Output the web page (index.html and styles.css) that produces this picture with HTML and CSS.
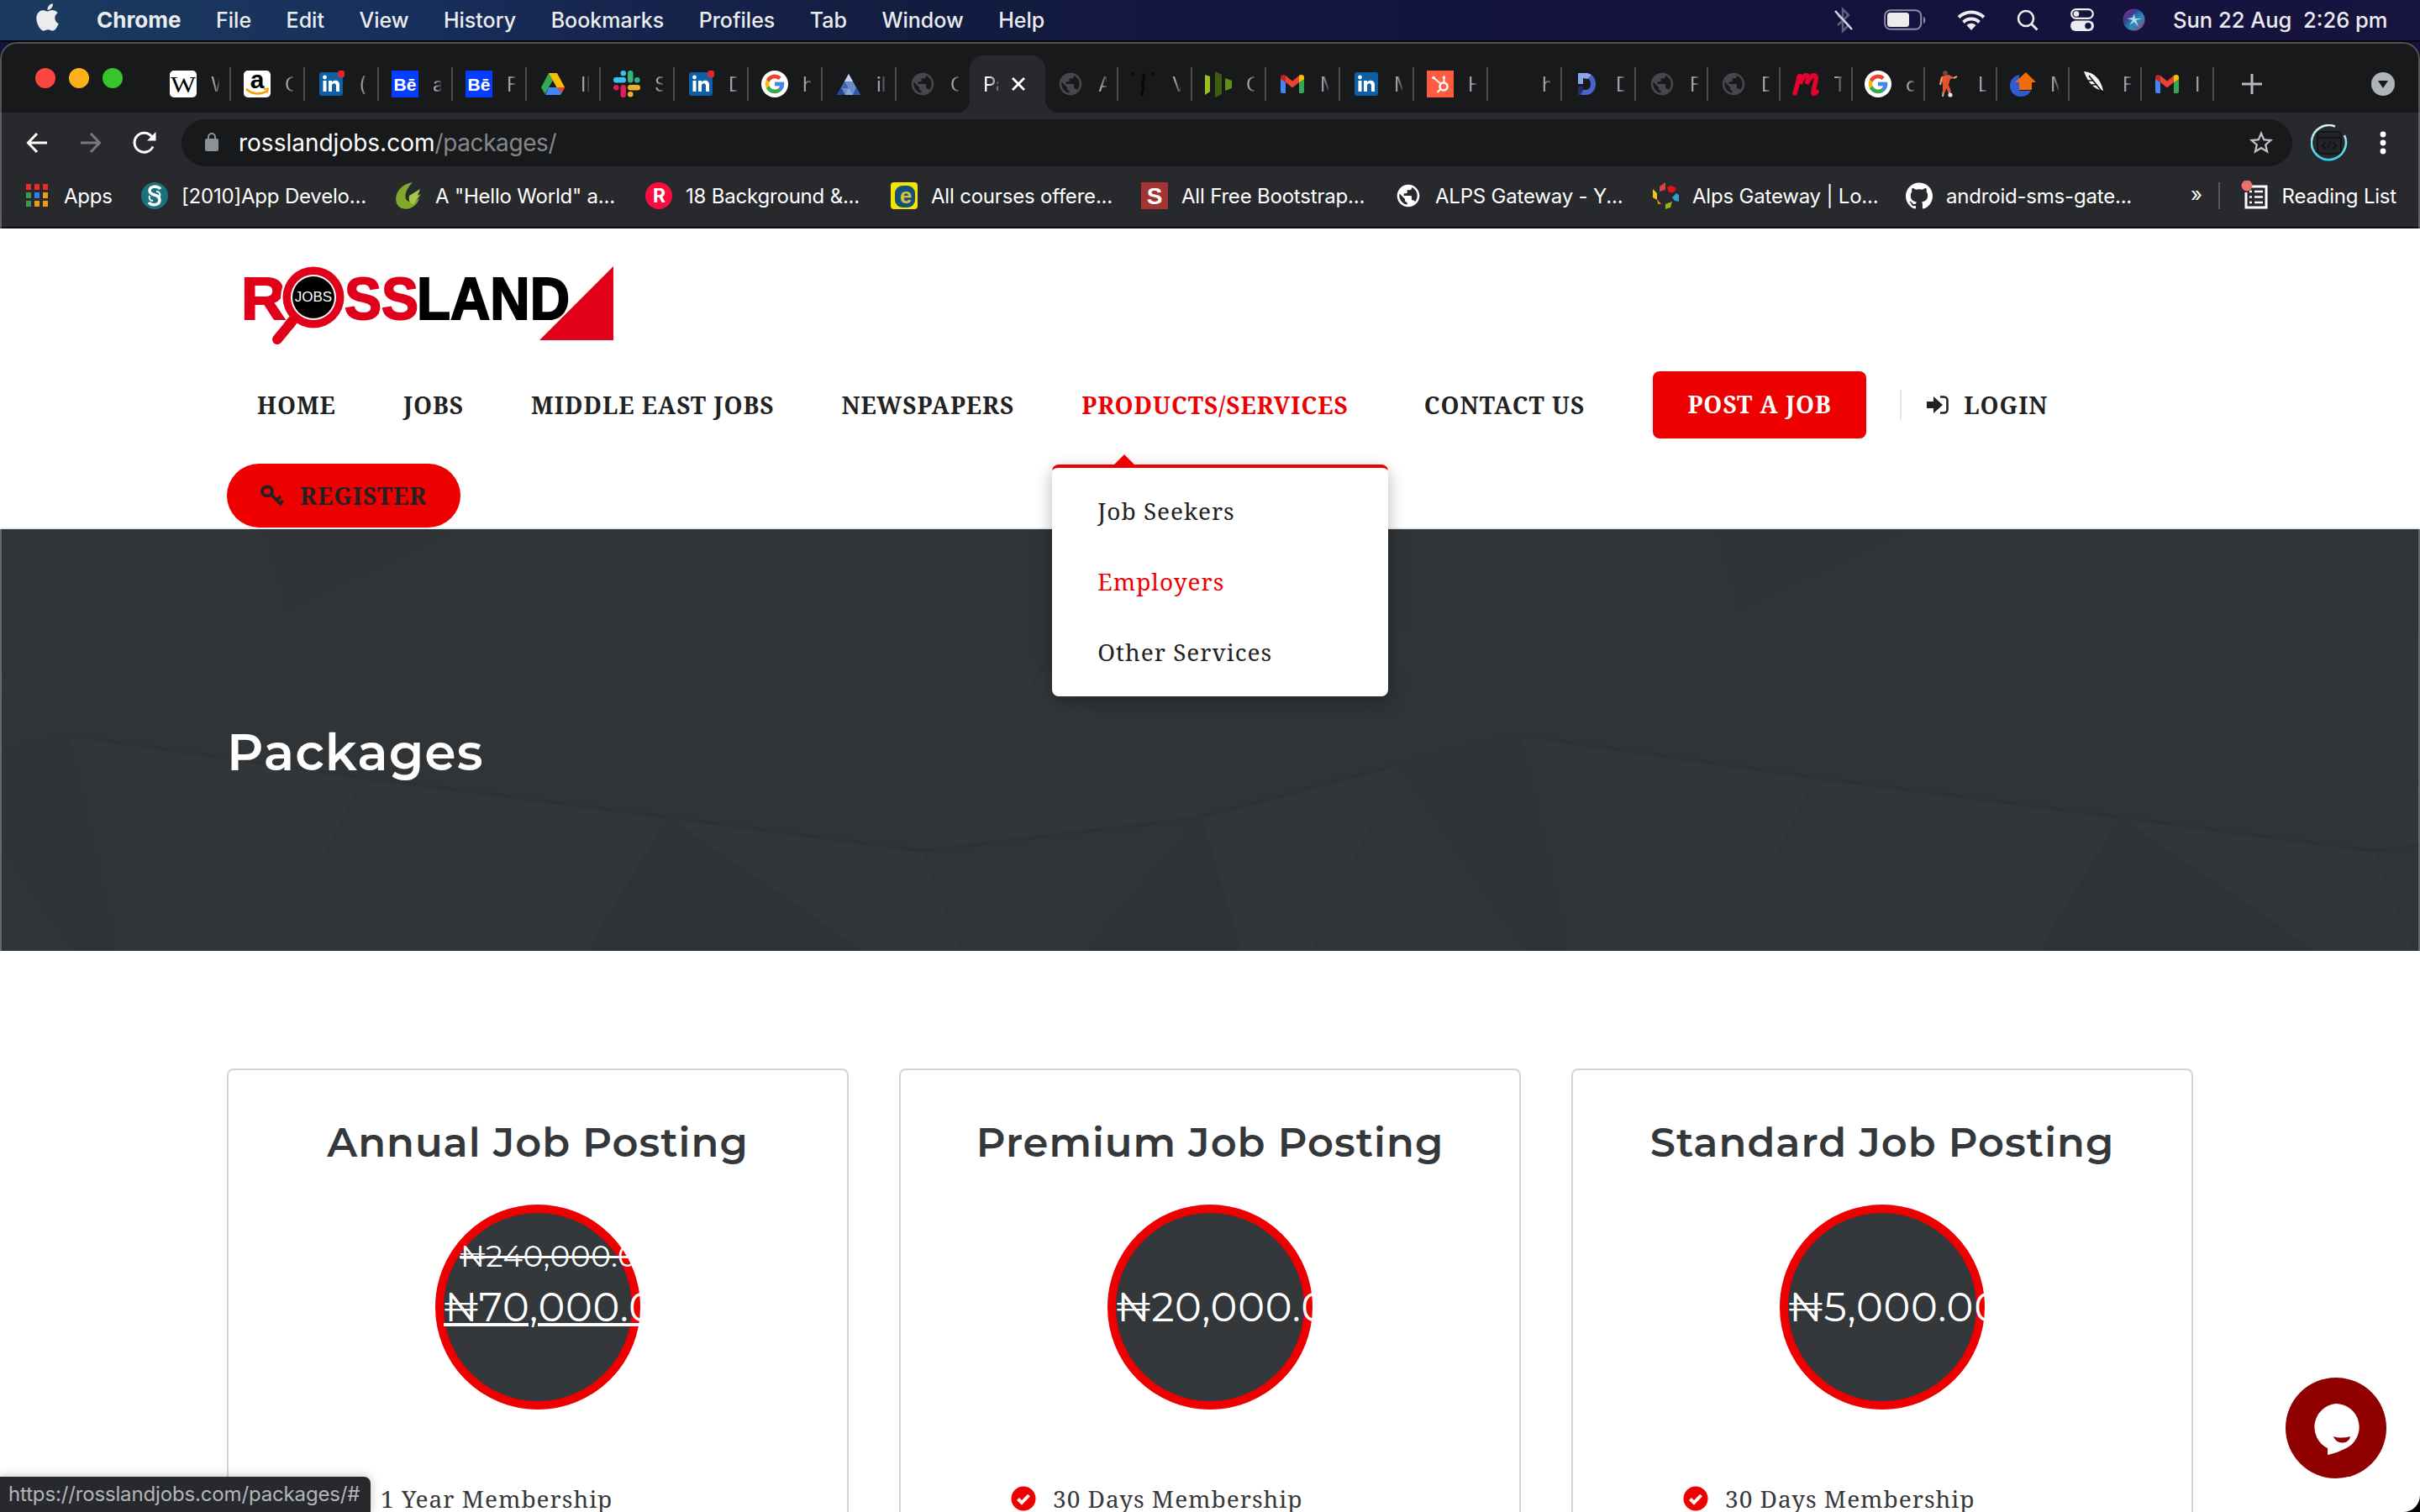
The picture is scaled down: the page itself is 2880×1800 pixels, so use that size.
FILE: index.html
```
<!DOCTYPE html>
<html lang="en">
<head>
<meta charset="utf-8">
<title>Packages</title>
<link rel="stylesheet" href="styles.css">
</head>
<body>
<svg class="defs" aria-hidden="true">
  <symbol id="globe" viewBox="0 0 24 24"><path d="M12 2C6.48 2 2 6.48 2 12s4.48 10 10 10 10-4.48 10-10S17.52 2 12 2zm-1 17.93c-3.95-.49-7-3.85-7-7.93 0-.62.08-1.21.21-1.79L9 15v1c0 1.1.9 2 2 2v1.93zm6.9-2.54c-.26-.81-1-1.39-1.9-1.39h-1v-3c0-.55-.45-1-1-1H8v-2h2c.55 0 1-.45 1-1V7h2c1.1 0 2-.9 2-2v-.41c2.93 1.19 5 4.06 5 7.41 0 2.08-.8 3.97-2.1 5.39z" fill="currentColor"/></symbol>
  <symbol id="linkedin" viewBox="0 0 32 32"><rect x="2" y="2" width="28" height="28" rx="3" fill="#0f5fa6"/><rect x="6.500" y="12" width="4" height="13" fill="#fff"/><circle cx="8.500" cy="8" r="2.400" fill="#fff"/><path d="M13 12h4v2c2-3.500 9-3.500 9 3v8h-4v-7c0-4-5-3.500-5 0v7h-4z" fill="#fff"/></symbol>
  <symbol id="reddot" viewBox="0 0 32 32"><circle cx="28" cy="4" r="4.500" fill="#e0262c"/></symbol>
  <symbol id="behance" viewBox="0 0 32 32"><rect width="32" height="32" fill="#053eff"/><text x="16" y="24" text-anchor="middle" class="glyph-be">Bē</text></symbol>
  <symbol id="gmail" viewBox="0 0 32 32"><path d="M2 8v17c0 1 1 2 2 2h4V14z" fill="#4285f4"/><path d="M30 8v17c0 1-1 2-2 2h-4V14z" fill="#34a853"/><path d="M8 14v-8l8 6.500L24 6v8l-8 6.500z" fill="#ea4335"/><path d="M2 8c0-3 3.500-4 6-2v8l-6-4z" fill="#c5221f"/><path d="M30 8c0-3-3.500-4-6-2v8l6-4z" fill="#fbbc04"/></symbol>
  <symbol id="google" viewBox="0 0 64 64"><circle cx="32" cy="32" r="32" fill="#fff"/><g transform="translate(5 5) scale(1.125)"><path fill="#fbbc05" d="M43.611 20.083H42V20H24v8h11.303c-1.649 4.657-6.08 8-11.303 8-6.627 0-12-5.373-12-12s5.373-12 12-12c3.059 0 5.842 1.154 7.961 3.039l5.657-5.657C34.046 6.053 29.268 4 24 4 12.955 4 4 12.955 4 24s8.955 20 20 20 20-8.955 20-20c0-1.341-.138-2.65-.389-3.917z"/><path fill="#ea4335" d="M6.306 14.691l6.571 4.819C14.655 15.108 18.961 12 24 12c3.059 0 5.842 1.154 7.961 3.039l5.657-5.657C34.046 6.053 29.268 4 24 4 16.318 4 9.656 8.337 6.306 14.691z"/><path fill="#34a853" d="M24 44c5.166 0 9.86-1.977 13.409-5.192l-6.19-5.238A11.91 11.91 0 0124 36c-5.202 0-9.619-3.317-11.283-7.946l-6.522 5.025C9.505 39.556 16.227 44 24 44z"/><path fill="#4285f4" d="M43.611 20.083H24v8h11.303a12.04 12.04 0 01-4.087 5.571l6.19 5.238C36.971 39.205 44 34 44 24c0-1.341-.138-2.65-.389-3.917z"/></g></symbol>
  <symbol id="check" viewBox="0 0 30 30"><circle cx="15" cy="15" r="14.500" fill="#ee0000"/><path d="M8.500 15.500l4.500 4.500 8.500-9" fill="none" stroke="#fff" stroke-width="4"/></symbol>
</svg>

<header class="menubar">
  <svg class="apple" viewBox="2 0 20 24"><path fill="#ececee" d="M12.152 6.896c-.948 0-2.415-1.078-3.96-1.04-2.04.027-3.91 1.183-4.961 3.014-2.117 3.675-.546 9.103 1.519 12.09 1.013 1.454 2.208 3.09 3.792 3.039 1.52-.065 2.09-.987 3.935-.987 1.831 0 2.35.987 3.96.948 1.637-.026 2.676-1.48 3.676-2.948 1.156-1.688 1.636-3.325 1.662-3.415-.039-.013-3.182-1.221-3.22-4.857-.026-3.04 2.48-4.494 2.597-4.559-1.429-2.09-3.623-2.324-4.39-2.376-2-.156-3.675 1.09-4.61 1.09zM15.53 3.83c.843-1.012 1.4-2.427 1.245-3.83-1.207.052-2.662.805-3.532 1.818-.78.896-1.454 2.338-1.273 3.714 1.338.104 2.715-.688 3.559-1.701"/></svg>
  <nav class="menus">
    <span class="app">Chrome</span><span>File</span><span>Edit</span><span>View</span><span>History</span><span>Bookmarks</span><span>Profiles</span><span>Tab</span><span>Window</span><span>Help</span>
  </nav>
  <div class="status-icons">
    <svg class="i-bt" width="24" height="32" viewBox="0 0 24 32"><path d="M5 10l13 12-7 7V3l7 7L5 22" fill="none" stroke="#5d6080" stroke-width="2.500"/><path d="M2 5l20 22" stroke="#d8d8e0" stroke-width="2.500"/></svg>
    <svg class="i-bat" width="50" height="26" viewBox="0 0 50 26"><rect x="1.200" y="1.200" width="43" height="22.600" rx="6.500" fill="none" stroke="#8c8da3" stroke-width="2"/><rect x="4" y="4" width="26" height="17" rx="3.500" fill="#ececee"/><path d="M47 9c3 1 3 7 0 8z" fill="#8c8da3"/></svg>
    <svg class="i-wifi" width="34" height="25" viewBox="0 0 34 25"><g fill="none" stroke="#ececee" stroke-width="4"><path d="M2 9.500a21.500 21.500 0 0130 0"/><path d="M7.500 15.500a13.500 13.500 0 0119 0"/></g><path d="M11.500 19a8 8 0 0111 0L17 25z" fill="#ececee"/></svg>
    <svg class="i-search" width="26" height="26" viewBox="0 0 26 26"><circle cx="11" cy="11" r="9" fill="none" stroke="#ececee" stroke-width="2.600"/><path d="M17.500 17.500l7 7" stroke="#ececee" stroke-width="3"/></svg>
    <svg class="i-cc" width="28" height="27" viewBox="0 0 28 27"><rect x="1.200" y="1.200" width="25.600" height="10.600" rx="5.300" fill="none" stroke="#ececee" stroke-width="2.200"/><circle cx="7" cy="6.500" r="3.300" fill="#ececee"/><rect y="14.500" width="28" height="12.500" rx="6.200" fill="#ececee"/><circle cx="21" cy="20.800" r="3.800" fill="#14123c"/></svg>
    <svg class="i-siri" width="27" height="27" viewBox="0 0 27 27"><defs><linearGradient id="sg" x1="0" y1="0" x2="1" y2="1"><stop offset="0" stop-color="#c02c86"/><stop offset=".3" stop-color="#3a3a8c"/><stop offset=".6" stop-color="#2590b8"/><stop offset="1" stop-color="#c02c66"/></linearGradient></defs><circle cx="13.500" cy="13.500" r="13" fill="url(#sg)"/><path d="M14 6l1 6 8 0-7 2 3 8-5-6-6 4 4-6-7-2 7-1z" fill="#d4f4ff" opacity=".8"/></svg>
  </div>
  <div class="clock">Sun 22 Aug&nbsp; 2:26 pm</div>
</header>

<div class="window">
<section class="tabstrip">
  <div class="lights"><i class="red"></i><i class="amber"></i><i class="green"></i></div>
  <div class="tabs">
    <div class="tab"><svg viewBox="0 0 32 32"><rect width="32" height="32" rx="5" fill="#fff"/><text x="16" y="26" text-anchor="middle" class="glyph-w" textLength="30" lengthAdjust="spacingAndGlyphs">W</text></svg><span>W</span></div>
    <div class="tab"><svg viewBox="0 0 32 32"><rect width="32" height="32" rx="5" fill="#fff"/><text x="16" y="21" text-anchor="middle" class="glyph-a">a</text><path d="M3 22c8 7 18 7 25 2" fill="none" stroke="#f90" stroke-width="2.600"/><path d="M24 22l5-.500-1 5" fill="none" stroke="#f90" stroke-width="1.800"/></svg><span>C</span></div>
    <div class="tab"><svg viewBox="0 0 32 32"><use href="#linkedin"/><use href="#reddot"/></svg><span>(</span></div>
    <div class="tab"><svg><use href="#behance"/></svg><span>a</span></div>
    <div class="tab"><svg><use href="#behance"/></svg><span>F</span></div>
    <div class="tab"><svg viewBox="0 0 32 32"><path d="M11 3h10l-5 9z" fill="#188038"/><path d="M11 3l5 8.500L6.500 28 2 20z" fill="#34a853"/><path d="M21 3l9 17H20.500L11 3z" fill="#fbbc04"/><path d="M11 20h19l-5 9H7z" fill="#4285f4"/><path d="M20.500 20H30l-3.500 7z" fill="#ea4335"/></svg><span>II</span></div>
    <div class="tab"><svg viewBox="0 0 32 32"><g fill="#36c5f0"><rect x="0" y="8" width="15" height="6.500" rx="3.200"/><rect x="8.500" y="0" width="6.500" height="6.500" rx="3.200"/></g><g fill="#2eb67d"><rect x="17" y="0" width="6.500" height="14.500" rx="3.200"/><rect x="25" y="8" width="6.500" height="6.500" rx="3.200"/></g><g fill="#ecb22e"><rect x="17" y="17" width="15" height="6.500" rx="3.200"/><rect x="17" y="25" width="6.500" height="6.500" rx="3.200"/></g><g fill="#e01e5a"><rect x="8.500" y="17" width="6.500" height="15" rx="3.200"/><rect x="0" y="17" width="6.500" height="6.500" rx="3.200"/></g></svg><span>S</span></div>
    <div class="tab"><svg viewBox="0 0 32 32"><use href="#linkedin"/><use href="#reddot"/></svg><span>D</span></div>
    <div class="tab"><svg><use href="#google"/></svg><span>h</span></div>
    <div class="tab"><svg viewBox="0 0 32 32"><path d="M16 4l14 25H2z" fill="#6c8cc9"/><path d="M16 4l5 9H11z" fill="#c7d5ef"/><path d="M7 20l5 9H2z" fill="#1f4796"/><path d="M11 13l5 8H7z" fill="#3e63b0"/><path d="M16 21l5 8h-9z" fill="#8aa5da"/><path d="M25 20l5 9h-9z" fill="#2e57aa"/></svg><span>il</span></div>
    <div class="tab last dim"><svg><use href="#globe"/></svg><span>C</span></div>
    <div class="tab active"><span>Pa</span><svg class="close" viewBox="0 0 18 18"><path d="M2 2l14 14M16 2L2 16" stroke="#fff" stroke-width="2.800"/></svg></div>
    <div class="tab dim"><svg><use href="#globe"/></svg><span>A</span></div>
    <div class="tab"><svg viewBox="0 0 32 32"><path d="M14 4c5 6-2 8 0 13s-2 8-1 13M3 2L2 5M25 2l1 3" fill="none" stroke="#060707" stroke-width="3"/></svg><span>V</span></div>
    <div class="tab"><svg viewBox="0 0 32 32"><path d="M0 5l6 2v18l-6 4z" fill="#96c11f"/><path d="M12 1l8 4v23l-8 4z" fill="#3f5c12"/><path d="M24 9l8 3v9l-8 3z" fill="#5f8c1a"/></svg><span>C</span></div>
    <div class="tab"><svg><use href="#gmail"/></svg><span>M</span></div>
    <div class="tab"><svg><use href="#linkedin"/></svg><span>M</span></div>
    <div class="tab"><svg viewBox="0 0 32 32"><rect width="32" height="32" fill="#ff5c42"/><circle cx="20" cy="19" r="4.500" fill="none" stroke="#fff" stroke-width="2.600"/><path d="M17 16L8 8.500M20.500 14V8M16.500 22l-4 4" stroke="#fff" stroke-width="2"/><circle cx="8" cy="8.500" r="1.800" fill="#fff"/><circle cx="20.500" cy="8" r="1.800" fill="#fff"/></svg><span>H</span></div>
    <div class="tab"><svg></svg><span>h</span></div>
    <div class="tab"><svg viewBox="0 0 32 32"><path d="M4 3h9c16 0 16 26 0 26H4V19h6v4h3c8 0 8-14 0-14H4z" fill="#4a63c8"/><path d="M4 3h11l5 2-5 5-5-1v7H4z" fill="#8aa5e8"/><path d="M4 19h6v4l-3 6H4z" fill="#232c6b"/></svg><span>D</span></div>
    <div class="tab slim dim"><svg><use href="#globe"/></svg><span>F</span></div>
    <div class="tab slim dim"><svg><use href="#globe"/></svg><span>D</span></div>
    <div class="tab slim"><svg viewBox="0 0 32 32"><path d="M3 27C6 18 7 12 8 7c2-2 4 2 1 9 3-8 7-13 10-9 1 3-1 5-2 9 3-7 8-13 11-9 2 4-4 15-3 20 1 1 3 0 4-2" fill="none" stroke="#e5002d" stroke-width="5.500" stroke-linecap="round"/></svg><span>T</span></div>
    <div class="tab slim"><svg><use href="#google"/></svg><span>c</span></div>
    <div class="tab slim"><svg viewBox="0 0 32 32"><circle cx="10" cy="3" r="3" fill="#6b4a34"/><path d="M5 7l9-2 8 4-6 1-2 7H7z" fill="#e5532d"/><path d="M20 9l4-2M6 8l-2 9M8 24l-1 7M14 24l2 5" stroke="#e0a06c" stroke-width="2.200"/><path d="M7 17h7l3 8-3 1-3-5-1 5H7z" fill="#e5532d"/><circle cx="16" cy="29" r="2.600" fill="#dfe6ea"/></svg><span>L</span></div>
    <div class="tab slim"><svg viewBox="0 0 32 32"><path d="M15 5C-4 5-3 31 14 31c6 0 10-3 12-7H12V5z" fill="#2f5bd0"/><path d="M20 2l12 12h-5v9H12v-9H7z" fill="#f26a0a"/></svg><span>M</span></div>
    <div class="tab slim"><svg viewBox="0 0 32 32"><path d="M3 1c12 1 20 9 23 23C14 22 8 14 3 1z" fill="#f4f4f4"/><path d="M9 6l18 22M8 12l6 0M12 17l7 0" stroke="#0c0c0c" stroke-width="1.500"/></svg><span>F</span></div>
    <div class="tab slim"><svg><use href="#gmail"/></svg><span>I</span></div>
  </div>
  <svg class="plus" viewBox="0 0 24 24"><path d="M12 0v24M0 12h24" stroke="#b4b7bc" stroke-width="3"/></svg>
  <svg class="tabsearch" viewBox="0 0 28 28"><circle cx="14" cy="14" r="14" fill="#b0b4ba"/><path d="M8 10h12l-6 9z" fill="#18191b"/></svg>
</section>

<section class="toolbar">
  <svg class="back" viewBox="0 0 26 26"><path d="M25 13H3M13 2L2.500 13 13 24" fill="none" stroke="#fff" stroke-width="3"/></svg>
  <svg class="fwd" viewBox="0 0 26 26"><path d="M1 13h22M13 2l10.500 11L13 24" fill="none" stroke="#78797c" stroke-width="3"/></svg>
  <svg class="reload" viewBox="0 0 28 28"><path d="M24 18.500A11.500 11.500 0 1122.500 6.500" fill="none" stroke="#fff" stroke-width="3"/><path d="M27.500 1v10.500H17z" fill="#fff"/></svg>
  <div class="omnibox">
    <svg class="lock" viewBox="0 0 16 22"><rect y="7" width="16" height="15" rx="2" fill="#8b9299"/><path d="M4 8V5a4 4 0 018 0v3" fill="none" stroke="#8b9299" stroke-width="2"/></svg>
    <span class="url">rosslandjobs.com<b>/packages/</b></span>
    <svg class="star" viewBox="0 0 24 24"><path d="M22 9.240l-7.190-.620L12 2 9.190 8.630 2 9.240l5.460 4.730L5.820 21 12 17.270 18.180 21l-1.630-7.030L22 9.240zM12 15.400l-3.760 2.270 1-4.280-3.320-2.880 4.380-.380L12 6.100l1.710 4.040 4.380.380-3.320 2.880 1 4.280L12 15.400z" fill="#bfc1c5"/></svg>
  </div>
  <svg class="profile" viewBox="0 0 44 44"><defs><linearGradient id="pg" x1="0" y1="1" x2="0" y2="0"><stop offset="0" stop-color="#38d0f0"/><stop offset="1" stop-color="#d8eef0"/></linearGradient></defs><path d="M40 13A20.500 20.500 0 1129 2.600" fill="none" stroke="url(#pg)" stroke-width="2.600"/><rect x="8" y="9" width="28" height="26" rx="4" fill="#222427" stroke="#131415" stroke-width="2"/><path d="M8 16h28M18 21l-4 4 4 4M26 21l4 4-4 4M23.500 20l-3 10" fill="none" stroke="#131415" stroke-width="1.800"/></svg>
  <svg class="dots" viewBox="0 0 8 28"><circle cx="4" cy="4" r="3.400" fill="#fff"/><circle cx="4" cy="14" r="3.400" fill="#fff"/><circle cx="4" cy="24" r="3.400" fill="#fff"/></svg>
</section>

<section class="bookmarks">
  <div class="bm w-apps"><svg viewBox="0 0 32 32"><g fill="#ee2a24"><rect x="3" y="2" width="6" height="7"/><rect x="13" y="2" width="6" height="7"/><rect x="23" y="2" width="6" height="7"/></g><g><rect x="3" y="12" width="6" height="7" fill="#3d9a4a"/><rect x="13" y="12" width="6" height="7" fill="#2f7cf0"/><rect x="23" y="12" width="6" height="7" fill="#f09a10"/><rect x="3" y="22" width="6" height="7" fill="#3d9a4a"/><rect x="13" y="22" width="6" height="7" fill="#f09a10"/><rect x="23" y="22" width="6" height="7" fill="#f09a10"/></g></svg><span>Apps</span></div>
  <div class="bm w-2010"><svg viewBox="0 0 32 32"><circle cx="16" cy="16" r="16" fill="#1d717c"/><path d="M23 8c-3-4-13-4-13 2 0 7 12 3 12 11 0 7-10 7-13 3" fill="none" stroke="#fff" stroke-width="3.500"/><path d="M18 11c4 0 5 3 4 6M14 22c-4 0-5-3-4-6" fill="none" stroke="#fff" stroke-width="2"/></svg><span>[2010]App Develo...</span></div>
  <div class="bm w-hello"><svg viewBox="0 0 32 32"><path d="M21 0C6 2-3 16 3 27c7 9 22 5 26-8-5 5-13 6-16 1-2-6 2-14 8-20z" fill="#80a82c"/><path d="M17 16l13-8-3 8 4-2-9 12c-4 0-6-4-5-10z" fill="#a6c64a"/></svg><span>A "Hello World" a...</span></div>
  <div class="bm w-18"><svg viewBox="0 0 32 32"><circle cx="16" cy="16" r="16" fill="#f70d42"/><text x="16.500" y="24" text-anchor="middle" class="glyph-r">R</text></svg><span>18 Background &amp;...</span></div>
  <div class="bm w-all"><svg viewBox="0 0 32 32"><rect width="32" height="32" rx="4" fill="#f4e400"/><rect x="5" y="4" width="24" height="26" rx="9" fill="#14507c"/><text x="18" y="25" text-anchor="middle" class="glyph-e">e</text></svg><span>All courses offere...</span></div>
  <div class="bm w-boot"><svg viewBox="0 0 32 32"><rect width="32" height="32" fill="#a33433"/><text x="16" y="26" text-anchor="middle" class="glyph-s">S</text></svg><span>All Free Bootstrap...</span></div>
  <div class="bm w-alps"><svg class="globe"><use href="#globe"/></svg><span>ALPS Gateway - Y...</span></div>
  <div class="bm w-lo"><svg viewBox="0 0 32 32"><path d="M9 5l7-5v9l-7 2z" fill="#d8453a"/><path d="M1 8l5 5v8l-5-3z" fill="#f2c21c"/><path d="M18 6l5-2 6 3-3 5h-6z" fill="#e5121c"/><path d="M24 18l5-5 3 2v8l-5-1z" fill="#31a0cf"/><path d="M16 26l8-3-2 7-6 2z" fill="#9ab518"/><path d="M6 20l5 6-4 0z" fill="#e08a1c"/></svg><span>Alps Gateway | Lo...</span></div>
  <div class="bm w-git"><svg viewBox="0 0 24 24"><path fill="#fff" d="M12 .297c-6.630 0-12 5.373-12 12 0 5.303 3.438 9.800 8.205 11.385.6.113.82-.258.82-.577 0-.285-.01-1.040-.015-2.040-3.338.724-4.042-1.610-4.042-1.610C4.422 18.070 3.633 17.700 3.633 17.700c-1.087-.744.084-.729.084-.729 1.205.084 1.838 1.236 1.838 1.236 1.070 1.835 2.809 1.305 3.495.998.108-.776.417-1.305.76-1.605-2.665-.3-5.466-1.332-5.466-5.930 0-1.310.465-2.380 1.235-3.220-.135-.303-.54-1.523.105-3.176 0 0 1.005-.322 3.300 1.230.96-.267 1.980-.399 3-.405 1.020.006 2.040.138 3 .405 2.280-1.552 3.285-1.230 3.285-1.230.645 1.653.24 2.873.12 3.176.765.840 1.230 1.910 1.230 3.220 0 4.610-2.805 5.625-5.475 5.920.42.360.81 1.096.81 2.220 0 1.606-.015 2.896-.015 3.286 0 .315.21.690.825.570C20.565 22.092 24 17.592 24 12.297c0-6.627-5.373-12-12-12"/></svg><span>android-sms-gate...</span></div>
  <div class="more">»</div>
  <div class="reading"><svg viewBox="0 0 36 36"><path d="M11 7h20v25H7V14" fill="none" stroke="#fff" stroke-width="3"/><path d="M17 13h10M17 19.500h10M17 26h10" stroke="#fff" stroke-width="2.600"/><path d="M11 13h3M11 19.500h3M11 26h3" stroke="#fff" stroke-width="2.600"/><circle cx="8" cy="6" r="6.500" fill="#e8716b"/></svg><span>Reading List</span></div>
</section>

<main class="page">
  <header class="site-header">
    <svg class="logo" viewBox="0 0 480 108">
      <g class="logo-red"><text x="17" y="68" textLength="53" lengthAdjust="spacingAndGlyphs">R</text><text x="140" y="68" textLength="88" lengthAdjust="spacingAndGlyphs">SS</text></g>
      <g class="logo-black"><text x="226" y="68" textLength="182" lengthAdjust="spacingAndGlyphs">LAND</text></g>
      <path d="M79 69L60 92" stroke="#e1001a" stroke-width="12" stroke-linecap="round"/>
      <circle cx="103" cy="42" r="39" fill="#fff"/>
      <path d="M81 66l-8 10" stroke="#e1001a" stroke-width="12"/>
      <circle cx="103" cy="42" r="36.500" fill="#e1001a"/><circle cx="103" cy="42" r="27" fill="#fff"/><circle cx="103" cy="42" r="25" fill="#000"/>
      <text x="103" y="47" text-anchor="middle" class="logo-jobs">JOBS</text>
      <path d="M460 5v88h-88z" fill="#e1001a" stroke="#fff" stroke-width="3" paint-order="stroke"/>
    </svg>
    <nav class="nav">
      <a>HOME</a><a>JOBS</a><a>MIDDLE EAST JOBS</a><a>NEWSPAPERS</a>
      <a class="current">PRODUCTS/SERVICES
        <span class="dropdown"><span>Job Seekers</span><span class="hover">Employers</span><span>Other Services</span></span>
      </a>
      <a class="contact">CONTACT US</a>
      <a class="post">POST A JOB</a>
      <a class="login"><svg viewBox="0 0 26 22"><path d="M0 7h8V1l11 10L8 21v-6H0z" fill="#222"/><path d="M16 1.500h4.500a4 4 0 014 4v11a4 4 0 01-4 4H16" fill="none" stroke="#222" stroke-width="2.600"/></svg>LOGIN</a>
    </nav>
    <a class="register"><svg viewBox="0 0 28 26"><ellipse cx="8" cy="8" rx="6" ry="5.500" fill="none" stroke="#222" stroke-width="4"/><path d="M12 11l13 13M20 18l4-4M24 22l3-3" stroke="#222" stroke-width="3.600"/></svg>REGISTER</a>
  </header>

  <section class="banner">
    <svg class="facets" viewBox="0 0 2880 502" preserveAspectRatio="none" aria-hidden="true">
      <defs><g id="tile">
        <g fill="#323639"><path d="M80 245L433 295 326 502H239z"/><path d="M433 295L795 343 698 502H578z"/><path d="M505 400l73 102H381z"/><path d="M795 343l302 39 46 120H1028z"/><path d="M1245 165l185 178-333 39z"/><path d="M1665 280l-105 222h-83l-47-159z"/><path d="M-63 117L60 228-63 160z"/><path d="M707 0h93l440 165-145 210z"/></g>
        <g fill="#2f3336"><path d="M80 245L137 502H90L-60 280z"/><path d="M795 343l233 159H698z"/><path d="M1430 343l47 159h-182z"/><path d="M317 0h223L344 93z"/></g>
        <path d="M80 245L433 296 795 343l302 40 333-40 235-63 143-35" fill="none" stroke="#2f3235" stroke-width="4"/>
      </g></defs>
      <use href="#tile"/><use href="#tile" x="1728"/>
    </svg>
    <h1>Packages</h1>
  </section>

  <section class="cards">
    <article class="card">
      <h2>Annual Job Posting</h2>
      <div class="price sale"><del>₦240,000.00</del><ins>₦70,000.00</ins></div>
      <ul><li><svg><use href="#check"/></svg>1 Year Membership</li></ul>
    </article>
    <article class="card">
      <h2>Premium Job Posting</h2>
      <div class="price"><span>₦20,000.00</span></div>
      <ul><li><svg><use href="#check"/></svg>30 Days Membership</li></ul>
    </article>
    <article class="card">
      <h2>Standard Job Posting</h2>
      <div class="price"><span>₦5,000.00</span></div>
      <ul><li><svg><use href="#check"/></svg>30 Days Membership</li></ul>
    </article>
  </section>
</main>
</div>
<div class="hoverurl">https://rosslandjobs.com/packages/#</div>
<svg class="chat" viewBox="0 0 120 120"><circle cx="60" cy="60" r="60" fill="#910000"/><path d="M60 31a28 28 0 0110 54c-6 3-11 5-20 7v-8A28 28 0 0160 31z" fill="#fff"/><path d="M57 70c6 2 14 2 20 0-1 10-17 10-20 0z" fill="#910000"/></svg>
<svg class="corner" viewBox="0 0 20 20"><path d="M20 0v20H0A20 20 0 0020 0z" fill="#000"/></svg>
</body>
</html>
```
FILE: styles.css
```
* { box-sizing: border-box; }
html, body { margin: 0; width: 2880px; height: 1800px; overflow: hidden; }
body { font-family: Inter, "Liberation Sans", sans-serif; background: #14123c; }
svg { display: block; flex: none; }
.defs { position: absolute; width: 0; height: 0; }

/* macOS menu bar */
.menubar { height: 50px; display: flex; align-items: center; color: #ececee; background: linear-gradient(90deg, #1b3b5e 0, #172f5c 500px, #16264f 700px, #131c40 1100px, #131640 1500px, #14123c 2100px, #17133f 2880px); font-size: 25px; font-weight: 500; padding: 0 38px 1px 43px; border-bottom: 2px solid #06070c; }
.apple { width: 27px; height: 33px; margin-top: -6px; }
.menus { display: flex; align-items: center; gap: 41.5px; margin-left: 45px; }
.app { font-weight: 700; font-size: 26px; }
.status-icons { display: flex; align-items: center; margin-left: auto; }
.i-bat { margin-left: 36px; }
.i-wifi { margin-left: 37px; }
.i-search { margin-left: 37px; }
.i-cc { margin-left: 38px; }
.i-siri { margin-left: 34px; }
.clock { margin-left: 33px; width: 256px; white-space: nowrap; font-size: 25.5px; }

/* Browser window */
.window { position: relative; height: 1750px; overflow: hidden; display: flex; flex-direction: column; border-radius: 20px 20px 0 0; background: #18191b; padding-top: 2px; }
.window::after { content: ""; position: absolute; inset: 0; border: 2px solid rgba(255,255,255,.26); border-bottom: 0; border-radius: 20px 20px 0 0; }
.tabstrip { height: 82px; flex: none; display: flex; align-items: flex-start; padding: 0 30px 0 42px; }
.lights { display: flex; gap: 16px; padding-top: 29px; width: 145px; }
.lights i { width: 24px; height: 24px; border-radius: 50%; }
.red { background: #fc4642; }
.amber { background: #fdb017; }
.green { background: #38c42b; }
.tabs { display: flex; padding-top: 14px; }
.tab { width: 88px; height: 68px; display: flex; align-items: center; padding-left: 15px; position: relative; color: #a4a8ad; font-size: 24px; }
.tab svg { width: 32px; height: 32px; }
.tab span { width: 10px; margin-left: 17px; overflow: hidden; white-space: nowrap; -webkit-mask-image: linear-gradient(90deg, #000 30%, rgba(0,0,0,.3)); }
.tab::after { content: ""; width: 2px; height: 40px; background: #4a4c50; margin-left: auto; }
.tab.last::after { display: none; }
.tab.slim { width: 86px; }
.tab.slim + .tab.slim { padding-left: 14px; }
.dim svg { color: #45474b; }
.tab.active { width: 90px; margin: 0 -1px; background: #28292c; border-radius: 16px 16px 0 0; color: #fff; padding-left: 16px; }
.tab.active span { width: 18px; margin-left: 0; letter-spacing: -.5px; }
.tab.active .close { width: 18px; height: 18px; margin-left: 15px; }
.tab.active::before, .tab.active::after { content: ""; position: absolute; bottom: 0; width: 16px; height: 16px; background: radial-gradient(circle at 0 0, transparent 16px, #28292c 16.5px); }
.tab.active::before { left: -16px; }
.tab.active::after { right: -16px; background: radial-gradient(circle at 100% 0, transparent 16px, #28292c 16.5px); }
.plus { width: 24px; height: 24px; margin: 36px 0 0 33px; }
.tabsearch { width: 28px; height: 28px; margin: 34px 0 0 auto; }

.toolbar { height: 64px; flex: none; background: #28292c; display: flex; align-items: center; padding: 8px 40px 0 31px; }
.back, .fwd { width: 26px; height: 26px; }
.fwd { margin-left: 38px; }
.reload { width: 28px; height: 28px; margin-left: 37px; }
.omnibox { margin-left: 30px; width: 2512px; height: 56px; border-radius: 28px; background: #18191b; display: flex; align-items: center; padding: 0 20px 0 28px; }
.lock { width: 16px; height: 22px; margin-bottom: 2px; }
.url { margin-left: 24px; font-size: 28px; color: #fff; }
.url b { font-weight: 400; color: #85878b; letter-spacing: -.4px; }
.star { width: 34px; height: 34px; margin-left: auto; }
.profile { width: 44px; height: 44px; margin-left: 22px; }
.dots { width: 8px; height: 28px; margin-left: auto; }

.bookmarks { height: 74px; flex: none; background: #28292c; border-bottom: 2px solid #0e0e10; display: flex; align-items: center; padding: 0 28px 2px 28px; color: #fff; font-size: 24px; letter-spacing: -.2px; white-space: nowrap; }
.bm { display: flex; align-items: center; gap: 16px; }
.bm svg { width: 32px; height: 32px; }
.w-apps { width: 140px; }
.w-2010 { width: 302px; }
.w-hello { width: 298px; }
.w-18 { width: 292px; }
.w-all { width: 298px; }
.w-boot { width: 302px; }
.w-alps { width: 306px; }
.w-lo { width: 302px; }
.w-git { width: 339px; }
.more { width: 35px; border-right: 2px solid #55575a; height: 32px; line-height: 30px; }
.reading { display: flex; align-items: center; gap: 14px; margin-left: auto; }
.reading svg { width: 36px; height: 36px; }

/* Page */
.page { flex: 1; background: #fff; color: #222; font-family: "Noto Serif", "DejaVu Serif", serif; font-size: 28px; letter-spacing: 1px; }
.site-header { height: 358px; border-bottom: 2px solid #e9ecec; padding: 40px 270px 0; }
.logo { width: 480px; height: 108px; margin-bottom: 22px; }
.logo text { font: 700 71px "Liberation Sans", sans-serif; letter-spacing: 0; }
.logo-red { fill: #e1001a; stroke: #e1001a; stroke-width: 2px; }
.logo-black { fill: #000; stroke: #000; stroke-width: 2px; }
.logo .logo-jobs { font-size: 17px; font-weight: 400; fill: #fff; }
.nav { display: flex; align-items: center; height: 80px; padding-left: 36px; font-weight: 700; line-height: 36px; white-space: nowrap; }
.nav > a { margin-right: 80px; padding-bottom: 1px; }
.nav > .current { color: #ee0000; position: relative; margin-right: 90px; }
.nav > .contact { margin-right: 81px; }
.nav > .post { height: 80px; line-height: 79px; width: 254px; text-align: center; background: #ee0000; color: #fff; border-radius: 8px; margin-right: 40px; }
.nav > .login { display: flex; align-items: center; gap: 18px; height: 36px; border-left: 2px solid #e7e7e7; padding: 0 0 0 30px; margin: 0; line-height: 34px; }
.login svg { width: 26px; height: 22px; }
.register { margin-top: 30px; width: 278px; height: 76px; border-radius: 38px; background: #ee0000; display: flex; align-items: center; padding-left: 40px; gap: 19px; font-weight: 700; line-height: 74px; }
.register svg { width: 28px; height: 26px; }
.dropdown { position: absolute; left: -35px; top: 89px; width: 400px; height: 276px; border-top: 4px solid #ee0000; border-radius: 8px; background: #fff; box-shadow: 0 6px 20px rgba(0,0,0,.28); padding: 9px 54px; color: #222; font-weight: 400; display: flex; flex-direction: column; z-index: 3; }
.dropdown span { height: 84px; line-height: 84px; }
.dropdown .hover { color: #ee0000; }
.dropdown::before { content: ""; position: absolute; left: 74px; top: -16px; border: 12px solid transparent; border-top: 0; border-bottom: 12px solid #ee0000; }
.banner { height: 502px; background: #303437; display: grid; align-items: center; padding: 0 270px; }
.facets { grid-area: 1 / 1; width: 2880px; height: 502px; margin-left: -270px; }
.banner h1 { grid-area: 1 / 1; margin: 30px 0 0; color: #fff; font: 600 60px/72px Montserrat, Inter, sans-serif; letter-spacing: 1px; }
.cards { display: grid; grid-template-columns: repeat(3, 740px); gap: 60px; padding: 140px 270px 0; }
.card { height: 700px; border: 2px solid #d3d4d5; border-radius: 8px; color: #35383b; display: flex; flex-direction: column; align-items: center; }
.card h2 { margin: 56px 0 0; font: 600 48px/60px Montserrat, Inter, sans-serif; letter-spacing: 1px; }
.price { margin-top: 44px; width: 244px; height: 244px; border: 10px solid #ee0000; border-radius: 50%; background: #35383b; color: #fff; font: 400 48px/60px Montserrat, Inter, sans-serif; letter-spacing: .8px; display: flex; flex-direction: column; justify-content: center; }
.price.sale { padding-bottom: 60px; }
.price del { font-size: 35.5px; margin-left: 19px; text-decoration-thickness: 3px; }
.price ins { text-decoration-thickness: 4px; }
.card ul { list-style: none; margin: 84px 0 0; padding: 0; width: 474px; }
.card li { display: flex; align-items: center; gap: 20px; height: 44px; }
.card li svg { width: 30px; height: 30px; }

.hoverurl { position: absolute; left: 0; bottom: 0; width: 441px; height: 42px; line-height: 42px; padding-left: 10px; background: #28292c; color: #b3b6ba; font-size: 24px; letter-spacing: -.15px; border-radius: 0 8px 0 0; box-shadow: 0 0 12px rgba(0,0,0,.25); white-space: nowrap; }
.chat { position: absolute; left: 2720px; top: 1640px; width: 120px; height: 120px; }
.corner { position: absolute; right: 0; bottom: 0; width: 20px; height: 20px; }
.glyph-be { font: 700 21px "Liberation Sans", sans-serif; fill: #fff; }
.glyph-w { font: 400 28px "Liberation Serif", serif; fill: #000; }
.glyph-a { font: 700 30px "Liberation Sans", sans-serif; fill: #000; }
.glyph-r { font: 700 23px Inter, sans-serif; fill: #fff; }
.glyph-e { font: 700 26px "Liberation Sans", sans-serif; fill: #d8c03c; }
.glyph-s { font: 700 28px "Liberation Sans", sans-serif; fill: #fff; }
```
